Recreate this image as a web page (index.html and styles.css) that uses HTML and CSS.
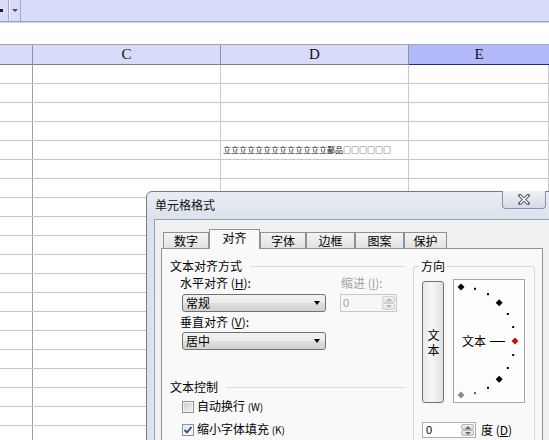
FILE: index.html
```html
<!DOCTYPE html>
<html lang="zh">
<head>
<meta charset="utf-8">
<title>单元格格式</title>
<link rel="stylesheet" href="styles.css">
</head>
<body>
<div class="app">
  <div class="toolbar">
    <span class="tb-sq"></span>
    <div class="tb-drop"><i class="tri-dn dark"></i></div>
  </div>
  <div class="formula"></div>
  <div class="colhead">
    <div class="ch"></div>
    <div class="ch">C</div>
    <div class="ch">D</div>
    <div class="ch sel">E</div>
  </div>
  <div class="sheet">
    <div class="row"><div class="c rh"></div><div class="c"></div><div class="c"></div><div class="c"></div></div>
    <div class="row"><div class="c rh"></div><div class="c"></div><div class="c"></div><div class="c"></div></div>
    <div class="row"><div class="c rh"></div><div class="c"></div><div class="c"></div><div class="c"></div></div>
    <div class="row"><div class="c rh"></div><div class="c"></div><div class="c"></div><div class="c"></div></div>
    <div class="row"><div class="c rh"></div><div class="c"></div><div class="c junk">立立立立立立立立立立立立立鄙品□□□□□□</div><div class="c"></div></div>
    <div class="row"><div class="c rh"></div><div class="c"></div><div class="c"></div><div class="c"></div></div>
    <div class="row"><div class="c rh"></div><div class="c"></div><div class="c"></div><div class="c"></div></div>
    <div class="row"><div class="c rh"></div><div class="c"></div><div class="c"></div><div class="c"></div></div>
    <div class="row"><div class="c rh"></div><div class="c"></div><div class="c"></div><div class="c"></div></div>
    <div class="row"><div class="c rh"></div><div class="c"></div><div class="c"></div><div class="c"></div></div>
    <div class="row"><div class="c rh"></div><div class="c"></div><div class="c"></div><div class="c"></div></div>
    <div class="row"><div class="c rh"></div><div class="c"></div><div class="c"></div><div class="c"></div></div>
    <div class="row"><div class="c rh"></div><div class="c"></div><div class="c"></div><div class="c"></div></div>
    <div class="row"><div class="c rh"></div><div class="c"></div><div class="c"></div><div class="c"></div></div>
    <div class="row"><div class="c rh"></div><div class="c"></div><div class="c"></div><div class="c"></div></div>
    <div class="row"><div class="c rh"></div><div class="c"></div><div class="c"></div><div class="c"></div></div>
    <div class="row"><div class="c rh"></div><div class="c"></div><div class="c"></div><div class="c"></div></div>
    <div class="row"><div class="c rh"></div><div class="c"></div><div class="c"></div><div class="c"></div></div>
    <div class="row"><div class="c rh"></div><div class="c"></div><div class="c"></div><div class="c"></div></div>
    <div class="row"><div class="c rh"></div><div class="c"></div><div class="c"></div><div class="c"></div></div>
  </div>

  <div class="dialog">
    <div class="titlebar">单元格格式</div>
    <div class="close">
      <svg width="12" height="11" viewBox="0 0 12 11"><path d="M2 1.5 L10 9.5 M10 1.5 L2 9.5" stroke="#59626d" stroke-width="3.4" stroke-linecap="square" fill="none"/><path d="M2 1.5 L10 9.5 M10 1.5 L2 9.5" stroke="#ffffff" stroke-width="1.3" fill="none"/></svg>
    </div>
    <div class="client">
      <div class="tabs">
        <div class="tab w46">数字</div>
        <div class="tab on w51">对齐</div>
        <div class="tab w46">字体</div>
        <div class="tab w49">边框</div>
        <div class="tab w49">图案</div>
        <div class="tab w43">保护</div>
      </div>
      <div class="panel">
        <div class="left">
          <div class="ghead">文本对齐方式</div>
          <div class="align">
            <div class="sub1">
              <div class="lbl">水平对齐 (<u>H</u>):</div>
              <div class="select"><span>常规</span><i class="tri-dn"></i></div>
              <div class="lbl lbl2">垂直对齐 (<u>V</u>):</div>
              <div class="select sel2"><span>居中</span><i class="tri-dn"></i></div>
            </div>
            <div class="sub2">
              <div class="lbl dim">缩进 (<u>I</u>):</div>
              <div class="spin dis">
                <span class="val">0</span>
                <div class="spbtns"><span class="spb"><i class="tri-up"></i></span><span class="spb"><i class="tri-dn small"></i></span></div>
              </div>
            </div>
          </div>
          <div class="ghead gap">文本控制</div>
          <div class="chk"><span class="box"></span><span>自动换行 <small>(W)</small></span></div>
          <div class="chk"><span class="box on"><svg width="10" height="10" viewBox="0 0 10 10"><path d="M1.5 5 L4 7.5 L8.5 2" stroke="#2b4a8a" stroke-width="1.8" fill="none"/></svg></span><span>缩小字体填充 <small>(K)</small></span></div>
          <div class="chk last"><span class="box"></span></div>
        </div>
        <fieldset class="orient">
          <legend>方向</legend>
          <div class="orow">
            <div class="vbtn"><span class="vtext">文本</span></div>
            <div class="obox">
              <svg width="70" height="122" viewBox="0 0 70 122">
                <polygon points="7,3.5 10.5,7 7,10.5 3.5,7" fill="#000"/>
                <polygon points="45.2,19.3 48.7,22.8 45.2,26.3 41.7,22.8" fill="#000"/>
                <polygon points="61,57.5 64.5,61 61,64.5 57.5,61" fill="#c0141c"/>
                <polygon points="45.2,95.7 48.7,99.2 45.2,102.7 41.7,99.2" fill="#000"/>
                <polygon points="7,111.5 10.5,115 7,118.5 3.5,115" fill="#8a8a8a"/>
                <rect x="20" y="7.8" width="2" height="2" fill="#000"/>
                <rect x="33" y="13.2" width="2" height="2" fill="#000"/>
                <rect x="52.8" y="33" width="2" height="2" fill="#000"/>
                <rect x="58.2" y="46" width="2" height="2" fill="#000"/>
                <rect x="58.2" y="74" width="2" height="2" fill="#000"/>
                <rect x="52.8" y="87" width="2" height="2" fill="#000"/>
                <rect x="33" y="106.8" width="2" height="2" fill="#000"/>
                <rect x="20" y="112.2" width="2" height="2" fill="#555"/>
                <text x="8" y="65.5" font-size="12" font-family="Noto Sans CJK SC, sans-serif" fill="#000">文本</text>
                <line x1="36" y1="61.5" x2="51" y2="61.5" stroke="#000" stroke-width="1"/>
              </svg>
            </div>
          </div>
          <div class="degrow">
            <div class="spin deg">
              <span class="val">0</span>
              <div class="spbtns"><span class="spb"><i class="tri-up dk"></i></span><span class="spb"><i class="tri-dn small dk"></i></span></div>
            </div>
            <span class="deglbl">度 (<u>D</u>)</span>
          </div>
        </fieldset>
      </div>
    </div>
  </div>
</div>
</body>
</html>
```

FILE: styles.css
```css
* { box-sizing: border-box; }
html, body { margin: 0; padding: 0; }
body {
  width: 549px; height: 440px; overflow: hidden;
  font-family: "Noto Sans CJK SC", "Noto Sans", sans-serif;
  font-size: 12px; color: #000; background: #fff;
}
.app { position: relative; width: 549px; height: 440px; overflow: hidden; }

/* toolbar */
.toolbar {
  height: 22px; background: #d9dcf9; border-bottom: 1px solid #9ea2be;
  display: flex; align-items: flex-start;
}
.tb-sq { width: 3px; height: 3px; background: #1d1d2a; margin-top: 9px; }
.tb-drop {
  width: 13px; height: 21px; margin-left: 5px;
  border-left: 1px solid #a6aac6; border-right: 1px solid #a6aac6;
  box-shadow: inset 1px 0 0 #eef0ff;
  display: flex; align-items: center; justify-content: center;
}
.formula { height: 22px; border-top: 1px solid #cfd2e6; background: #fff; }

/* column header */
.colhead {
  display: grid; grid-template-columns: 33px 188px 188px 1fr;
  height: 21px; border-top: 1px solid #a3a5b8; background: #d9dcf9;
}
.ch {
  border-right: 1px solid #8f91aa; border-bottom: 1px solid #80808e;
  font-family: "Liberation Serif", serif; font-size: 15px; line-height: 19px;
  text-align: center; color: #111;
}
.ch.sel { background: #b3b9f8; border-bottom-color: #1f2b8c; border-right: none; }

/* sheet */
.row {
  display: grid; grid-template-columns: 33px 188px 188px 1fr;
  height: 19px; border-bottom: 1px solid #c6c6c6;
}
.c { border-right: 1px solid #c9c9c9; }
.c.rh { border-right-color: #a0a0a0; }
.junk { font-size: 8px; line-height: 18px; padding-left: 2px; white-space: nowrap; overflow: hidden; }

/* triangles */
.tri-dn { display: block; width: 0; height: 0; border-left: 3.5px solid transparent; border-right: 3.5px solid transparent; border-top: 4px solid #000; }
.tri-dn.dark { border-top-color: #4a4d60; border-left-width: 3px; border-right-width: 3px; border-top-width: 3px; }
.tri-dn.small { border-left-width: 3px; border-right-width: 3px; border-top: 3px solid #b4b4b4; }
.tri-up { display: block; width: 0; height: 0; border-left: 3px solid transparent; border-right: 3px solid transparent; border-bottom: 3px solid #b4b4b4; }
.tri-up.dk { border-bottom-color: #6a6a6a; }
.tri-dn.small.dk { border-top-color: #6a6a6a; }

/* dialog */
.dialog {
  position: absolute; left: 146px; top: 191px; width: 412px; height: 270px;
  border: 1px solid #6e7c8f; border-radius: 6px 6px 0 0;
  background: linear-gradient(180deg, #e8edf4 0, #dbe2eb 27px, #dde3eb 100%);
  padding: 0 7px;
}
.titlebar { height: 27px; display: flex; align-items: center; padding: 0 0 2px 1px; font-size: 12px; color: #111; }
.close {
  position: absolute; top: -1px; right: 11px; width: 44px; height: 18px;
  border: 1px solid #8793a4; border-top: none; border-radius: 0 0 4px 4px;
  background: linear-gradient(#eef2f7, #d5dce6);
  display: flex; align-items: center; justify-content: center;
}
.client { height: 242px; border: 1px solid #97a3b3; background: #f0f0f0; }
.tabs { display: flex; align-items: flex-end; height: 28px; padding-left: 8px; }
.tab {
  height: 16px; border: 1px solid #8d9198; border-bottom: none;
  background: linear-gradient(#f4f4f4, #e2e2e2);
  text-align: center; line-height: 15px;
}
.tab.on { height: 20px; margin-bottom: -1px; background: #f9f9f9; position: relative; z-index: 1; line-height: 16px; }
.w46 { width: 46px; } .w51 { width: 51px; } .w49 { width: 49px; } .w43 { width: 43px; }
.panel {
  margin: 0 6px; height: 220px; border: 1px solid #8d9198; background: #f9f9f9;
  display: flex; align-items: flex-start; padding-top: 9px;
}

/* left column */
.left { width: 251px; padding: 0 8px; }
.ghead { display: flex; align-items: center; height: 16px; line-height: 16px; white-space: nowrap; }
.ghead::after { content: ""; flex: 1; border-top: 1px solid #d6dde3; margin-left: 8px; }
.ghead.gap { margin-top: 29px; }
.align { display: flex; margin-left: 10px; }
.sub1 { width: 150px; }
.sub2 { margin-left: 10px; }
.lbl { height: 16px; line-height: 16px; margin-top: 1px; white-space: nowrap; }
.lbl2 { margin-top: 2px; }
.lbl u, .deglbl u { text-decoration: underline; }
.dim { color: #a3a3a3; margin-left: 1px; }
.select {
  display: flex; align-items: center; justify-content: space-between;
  width: 144px; height: 18px; margin: 3px 0 0 2px;
  border: 1px solid #707070; border-radius: 3px;
  background: linear-gradient(#f3f3f3 0%, #ebebeb 50%, #dedede 51%, #d2d2d2 100%);
  padding: 0 5px 0 3px; line-height: 16px;
}
.select.sel2 { margin-top: 2px; }

.spin { display: flex; justify-content: space-between; border: 1px solid #abadb3; background: #fff; height: 18px; }
.spin.dis { width: 57px; margin-top: 3px; border-color: #c8c8c8; background: #f7f7f7; }
.spin .val { padding-left: 2px; line-height: 16px; font-family: "Liberation Sans", sans-serif; font-size: 11px; }
.spin.dis .val { color: #a0a0a0; }
.spbtns { display: flex; flex-direction: column; width: 15px; padding: 1px; }
.spb {
  flex: 1; display: flex; align-items: center; justify-content: center;
  background: linear-gradient(#f5f5f5, #e4e4e4); border: 1px solid #cfcfcf; border-radius: 2px;
}
.spin.deg { width: 54px; height: 16px; }
.spin.deg .val { line-height: 14px; padding-left: 3px; }
.spin.deg .spb { border-color: #b8b8b8; background: linear-gradient(#f0f0f0, #d9d9d9); }

.chk { display: flex; align-items: center; height: 23px; padding-left: 12px; white-space: nowrap; line-height: 14px; }
.chk.last { height: 20px; align-items: flex-end; }
.chk .box {
  width: 12px; height: 12px; margin-right: 3px; flex: none;
  border: 1px solid #8e8f8f; box-shadow: inset 0 0 0 1px #f4f4f4;
  background: linear-gradient(135deg, #c9cdd3, #f3f4f6);
  display: flex; align-items: center; justify-content: center;
}
.chk .box.on { background: linear-gradient(135deg, #dde1e6, #fafafa); }
.chk small { font-size: 10px; }

/* orientation */
.orient {
  margin: 0; width: 122px; height: 200px; min-width: 0;
  border: 1px solid #d6d6d6; border-radius: 3px;
  padding: 5px 8px 0 8px;
}
.orient legend { padding: 0 2px; margin-left: -3px; line-height: 16px; font-size: 12px; }
.orow { display: flex; align-items: flex-start; }
.vbtn {
  width: 22px; height: 122px; margin-top: 2px;
  border: 1px solid #707070; border-radius: 3px;
  background: linear-gradient(90deg, #e9e9e9, #f6f6f6 40%, #e2e2e2);
  display: flex; align-items: center; justify-content: center;
}
.vtext { writing-mode: vertical-rl; text-orientation: upright; letter-spacing: 3px; line-height: 14px; padding-top: 3px; }
.obox { width: 72px; height: 124px; margin-left: 9px; border: 1px solid #a6a6a6; background: #fdfdfd; }
.obox svg { display: block; }
.degrow { display: flex; align-items: center; margin-top: 19px; }
.deglbl { margin-left: 5px; line-height: 16px; white-space: nowrap; }
```
